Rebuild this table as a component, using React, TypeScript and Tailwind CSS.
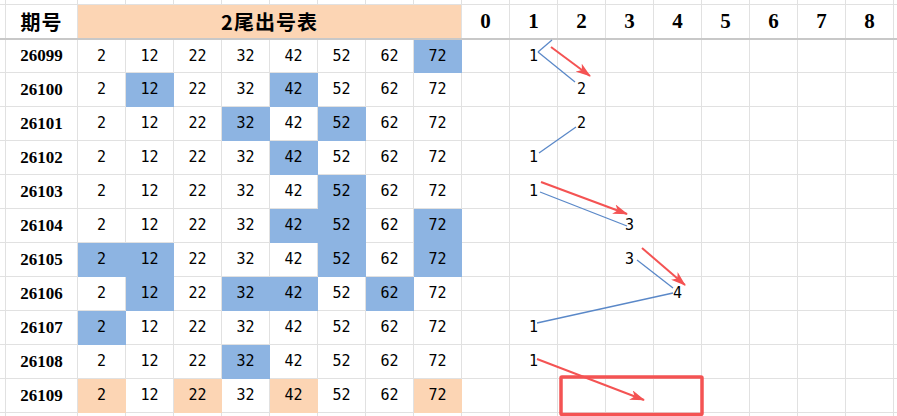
import React from 'react';

type Row = { id: string; hi: number[]; trend: number | null; orange?: boolean };

const values = ['2', '12', '22', '32', '42', '52', '62', '72'];

const rows: Row[] = [
  { id: '26099', hi: [7], trend: 1 },
  { id: '26100', hi: [1, 4], trend: 2 },
  { id: '26101', hi: [3, 5], trend: 2 },
  { id: '26102', hi: [4], trend: 1 },
  { id: '26103', hi: [5], trend: 1 },
  { id: '26104', hi: [4, 5, 7], trend: 3 },
  { id: '26105', hi: [0, 1, 5, 7], trend: 3 },
  { id: '26106', hi: [1, 3, 4, 6], trend: 4 },
  { id: '26107', hi: [0], trend: 1 },
  { id: '26108', hi: [3], trend: 1 },
  { id: '26109', hi: [0, 2, 4, 7], trend: null, orange: true },
];

const trendCols = [0, 1, 2, 3, 4, 5, 6, 7, 8];

// blue connectors and red arrows drawn over the trend area
const blueLines = [
  [552, 40, 538, 52],
  [538, 52, 575, 82],
  [576, 127, 539, 153],
  [540, 192, 627, 226],
  [637, 260, 673, 288],
  [673, 293, 537, 323],
];

const redArrows = [
  [551, 47, 590, 76],
  [541, 182, 627, 214],
  [642, 248, 685, 285],
  [537, 359, 644, 400],
];

function DataRow({ row, first }: { row: Row; first: boolean }) {
  return (
    <div className={`flex ${first ? 'h-[33px]' : 'h-[34px]'}`}>
      <div className="w-[6px] shrink-0 border-r border-b border-[#e1e1e1]" />
      <div className="w-[72px] shrink-0 border-r border-b border-[#e1e1e1] flex items-center justify-center font-['Liberation_Serif',serif] font-bold text-[17px] text-black">
        {row.id}
      </div>
      {values.map((v, i) => {
        const on = row.hi.includes(i);
        const cls = !on
          ? 'bg-white border-[#e1e1e1]'
          : row.orange
            ? 'bg-[#fcd5b4] border-[#fcd5b4]'
            : 'bg-[#8db4e2] border-[#8db4e2]';
        return (
          <div key={v} className={`w-[48px] shrink-0 border-r border-b flex items-center justify-center ${cls}`}>
            {v}
          </div>
        );
      })}
      {trendCols.map(c => (
        <div key={c} className="w-[48px] shrink-0 border-r border-b border-[#e1e1e1] flex items-center justify-center">
          {row.trend === c ? c : ''}
        </div>
      ))}
      <div className="flex-1 border-b border-[#e1e1e1]" />
    </div>
  );
}

export default function App() {
  return (
    <div className="relative w-[897px] h-[416px] overflow-hidden bg-white font-['DejaVu_Sans_Mono',monospace] text-[15px] text-black">
      {/* top strip of the sheet */}
      <div className="flex h-[5px]">
        <div className="w-[6px] shrink-0 border-r border-b border-[#e1e1e1]" />
        <div className="w-[72px] shrink-0 border-r border-b border-[#e1e1e1]" />
        {values.map(v => (
          <div key={v} className="w-[48px] shrink-0 border-r border-b border-[#e1e1e1]" />
        ))}
        {trendCols.map(c => (
          <div key={c} className="w-[48px] shrink-0 border-r border-b border-[#e1e1e1]" />
        ))}
        <div className="flex-1 border-b border-[#e1e1e1]" />
      </div>

      {/* header */}
      <div className="flex h-[35px] border-b-2 border-[#c8c8c8]">
        <div className="w-[6px] shrink-0 border-r border-[#e1e1e1]" />
        <div className="w-[72px] shrink-0 border-r border-[#e1e1e1] flex items-center justify-center font-['Noto_Sans_CJK_SC',sans-serif] font-bold text-[20px] tracking-[1px]">
          期号
        </div>
        <div className="w-[384px] shrink-0 border-r border-[#e1e1e1] bg-[#fcd5b4] flex items-center justify-center font-['Noto_Sans_CJK_SC',sans-serif] font-bold text-[20px] tracking-[1px]">
          2尾出号表
        </div>
        {trendCols.map(c => (
          <div key={c} className="w-[48px] shrink-0 border-r border-[#e1e1e1] flex items-center justify-center font-['Liberation_Serif',serif] font-bold text-[21px]">
            {c}
          </div>
        ))}
        <div className="flex-1" />
      </div>

      {rows.map((r, i) => (
        <DataRow key={r.id} row={r} first={i === 0} />
      ))}

      <div className="flex h-[10px]">
        <div className="w-[6px] shrink-0 border-r border-[#e1e1e1]" />
        <div className="w-[72px] shrink-0 border-r border-[#e1e1e1]" />
        {values.map(v => (
          <div key={v} className="w-[48px] shrink-0 border-r border-[#e1e1e1]" />
        ))}
        {trendCols.map(c => (
          <div key={c} className="w-[48px] shrink-0 border-r border-[#e1e1e1]" />
        ))}
      </div>

      <svg className="absolute left-0 top-0 pointer-events-none" width="897" height="416" viewBox="0 0 897 416">
        <defs>
          <marker id="arrow" markerUnits="userSpaceOnUse" markerWidth="16" markerHeight="10" refX="14" refY="5" orient="auto">
            <path d="M0,0 L15,5 L0,10 L4,5 z" fill="#f45353" />
          </marker>
        </defs>
        {blueLines.map(([x1, y1, x2, y2], i) => (
          <line key={i} x1={x1} y1={y1} x2={x2} y2={y2} stroke="#5a88c8" strokeWidth="1.3" />
        ))}
        {redArrows.map(([x1, y1, x2, y2], i) => (
          <line key={i} x1={x1} y1={y1} x2={x2} y2={y2} stroke="#f45353" strokeWidth="2" markerEnd="url(#arrow)" />
        ))}
        <rect x="561" y="377" width="141" height="37.5" rx="1" fill="none" stroke="#f45353" strokeWidth="3.5" />
      </svg>
    </div>
  );
}
